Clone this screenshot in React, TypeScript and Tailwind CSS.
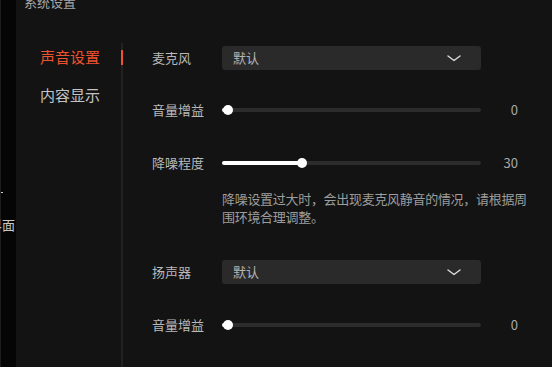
import React from "react"

// Audio settings panel (dark theme)

function Chevron() {
  return (
    <svg width="14" height="8" viewBox="0 0 14 8" fill="none">
      <path d="M1 2 L7 6.5 L13 2" stroke="#dcdcdc" strokeWidth="1.4" strokeLinecap="round" strokeLinejoin="round" />
    </svg>
  )
}

function Select({ value }: { value: string }) {
  return (
    <div className="flex h-6 w-[259px] items-center justify-between rounded-[3px] bg-[#2a2a2a] pl-[11px] pr-5">
      <span className="text-[13px] text-[#b4b4b4]">{value}</span>
      <Chevron />
    </div>
  )
}

function Slider({ value }: { value: number }) {
  const pos = 6 + (value / 100) * 248
  return (
    <div className="flex items-center">
      <div className="relative h-6 w-[259px]">
        <div className="absolute left-0 right-0 top-[10px] h-[4px] rounded-full bg-[#2c2c2c]" />
        <div className="absolute left-0 top-[10px] h-[4px] rounded-full bg-white" style={{ width: pos }} />
        <div className="absolute top-[7px] h-[10px] w-[10px] rounded-full bg-white" style={{ left: pos - 5 }} />
      </div>
      <div className="w-[37px] text-right text-[13px] text-[#a9a9a9]">{value}</div>
    </div>
  )
}

function Row({ label, children, className }: { label: string; children: React.ReactNode; className?: string }) {
  return (
    <div className={"flex h-6 items-center " + (className ?? "")}>
      <div className="w-[70px] text-[13px] text-[#b9b9b9]">{label}</div>
      {children}
    </div>
  )
}

export default function App() {
  return (
    <div className="flex h-[367px] w-[552px] overflow-hidden bg-[#050505] font-['Noto_Sans_CJK_SC','Noto_Sans',sans-serif]">
      {/* edge of the window behind */}
      <div className="relative w-4 shrink-0 border-l border-[#1c1c1c]">
        <div className="absolute left-0 top-[192px] h-px w-[2px] bg-[#cfcfcf]" />
        <div className="absolute right-[1px] top-[216px] whitespace-nowrap text-[13px] leading-[18px] text-[#c9c9c9]">界面</div>
      </div>

      <div className="flex flex-1 flex-col bg-[#131313]">
        <div className="-mt-[7px] h-[50px] pl-2 text-[13px] leading-[18px] text-[#a8a8a8]">系统设置</div>

        <div className="flex flex-1">
          <nav className="w-[107px] shrink-0 border-r-2 border-[#222222] pl-6">
            <div className="relative flex h-7 items-center text-[15px] text-[#ee5230]">
              声音设置
              <span className="absolute -right-[2px] top-[7px] h-[15px] w-[2px] bg-[#ee5230]" />
            </div>
            <div className="mt-[10px] flex h-7 items-center text-[15px] text-[#c4c4c4]">内容显示</div>
          </nav>

          <div className="flex flex-col pl-[29px] pt-[3px]">
            <Row label="麦克风">
              <Select value="默认" />
            </Row>
            <Row label="音量增益" className="mt-7">
              <Slider value={0} />
            </Row>
            <Row label="降噪程度" className="mt-[29px]">
              <Slider value={30} />
            </Row>
            <p className="ml-[70px] mt-[15px] whitespace-nowrap text-[13px] leading-[18px] tracking-[-0.3px] text-[#9d9d9d]">
              降噪设置过大时，会出现麦克风静音的情况，请根据周
              <br />
              围环境合理调整。
            </p>
            <Row label="扬声器" className="mt-[34px]">
              <Select value="默认" />
            </Row>
            <Row label="音量增益" className="mt-[29px]">
              <Slider value={0} />
            </Row>
          </div>
        </div>
      </div>
    </div>
  )
}
